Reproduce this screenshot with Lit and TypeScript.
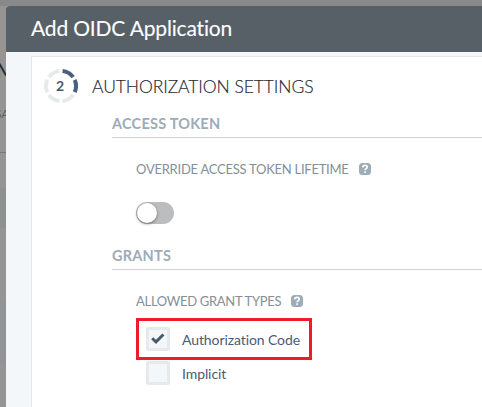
import { LitElement, html, svg, css } from "lit";
import { customElement, property, state } from "lit/decorators.js";
import { classMap } from "lit/directives/class-map.js";

@customElement("step-ring")
class StepRing extends LitElement {
  @property({ type: Number }) step = 1;
  static styles = css`
    :host { display: block; width: 34px; height: 34px; }
    svg { display: block; }
    .seg { fill: none; stroke: #e6eaed; stroke-width: 4; }
    .done { stroke: #4a607f; }
    .num { font: 700 14px Lato, sans-serif; fill: #485a70; text-anchor: middle; }
  `;
  render() {
    return html`<svg width="34" height="34" viewBox="0 0 34 34">
      ${[0, 1, 2, 3, 4, 5].map((i) => {
        const at = (deg: number) => {
          const a = ((deg - 90) * Math.PI) / 180;
          return `${17 + 15 * Math.cos(a)} ${17 + 15 * Math.sin(a)}`;
        };
        return svg`<path class=${i < this.step ? "seg done" : "seg"}
          d="M${at(i * 60 + 6)} A15 15 0 0 1 ${at(i * 60 + 54)}" />`;
      })}
      <text class="num" x="16" y="21.5">${this.step}</text>
    </svg>`;
  }
}

@customElement("help-icon")
class HelpIcon extends LitElement {
  static styles = css`
    :host { display: block; width: 12px; height: 12px; }
    svg { display: block; }
  `;
  render() {
    return html`<svg width="12" height="12" viewBox="0 0 12 12">
      <rect width="12" height="12" rx="3.5" fill="#9dacb6" />
      <path d="M3.6 4.3C3.8 2.9 4.8 2.4 6 2.4s2.3.6 2.3 1.8c0 1.5-2.2 1.3-2.2 3.1" fill="none" stroke="#fff" stroke-width="1.6" />
      <rect x="5.2" y="8.3" width="1.7" height="1.6" fill="#fff" />
    </svg>`;
  }
}

@customElement("check-option")
class CheckOption extends LitElement {
  @property({ type: Boolean }) checked = false;
  @property() label = "";
  static styles = css`
    :host { display: flex; align-items: center; height: 24px; gap: 12px; }
    .box { box-sizing: border-box; width: 24px; height: 24px; border: 3px solid #e6eaed; border-radius: 2px; background: #f3f7fa; }
    svg { display: block; }
    .label { font: 400 14px/24px Lato, sans-serif; color: #4a5a78; letter-spacing: -0.09px; white-space: nowrap; padding-top: 2px; }
  `;
  render() {
    return html`<div class="box">
        ${this.checked
          ? html`<svg width="18" height="18" viewBox="0 0 18 18"><path d="M3.2 8.2l3.8 3.7 7.4-7.4" fill="none" stroke="#4a5a6c" stroke-width="3" /></svg>`
          : ""}
      </div>
      <span class="label">${this.label}</span>`;
  }
}

@customElement("app-root")
class AppRoot extends LitElement {
  @state() override = false;
  static styles = css`
    :host { display: block; position: relative; width: 482px; height: 407px; overflow: hidden; background: #969594; font-family: Lato, sans-serif; }
    .page { position: absolute; inset: 0; }
    .topbar { height: 6px; background: #898989; }
    .behind { position: absolute; white-space: nowrap; }
    .name { left: -4px; top: 58px; font-size: 21px; line-height: 24px; color: #25282b; }
    .caption { left: -5px; top: 107px; font-size: 12px; line-height: 14px; color: #5e6264; }
    .rule { left: 0; top: 152px; width: 6px; height: 1px; background: #777; }
    .band { left: 0; top: 188px; width: 6px; height: 40px; background: #8d9291; }
    .low { left: 0; top: 303px; width: 6px; height: 62px; background: #929394; }
    .modal { position: absolute; left: 6px; top: 6px; right: 0; bottom: 0; border-radius: 3px 0 0 0; overflow: hidden; background: #f3f7fa; display: flex; flex-direction: column; }
    header { height: 46px; background: #586067; color: #fff; padding-left: 25px; font-size: 21px; line-height: 44px; letter-spacing: -0.17px; flex: none; white-space: nowrap; -webkit-text-stroke: 0.1px #fff; }
    .panel { margin: 4px 0 0 25px; flex: 1; border: 1px solid #e4e8eb; border-width: 1px 0 0 1px; background: #fff; }
    .head { display: flex; align-items: center; gap: 14px; height: 57px; padding-left: 12px; }
    .head h2 { margin: 0; font-size: 17.5px; font-weight: 300; line-height: 24px; letter-spacing: -0.08px; color: #23282f; padding-top: 3px; white-space: nowrap; -webkit-text-stroke: 0.15px #23282f; }
    section { margin-left: 80px; }
    h3 { box-sizing: border-box; margin: 0; height: 24px; border-bottom: 1px solid #d0d2d3; font-size: 14.5px; line-height: 20px; color: #9dacb6; font-weight: 700; letter-spacing: 0.23px; white-space: nowrap; }
    .fields { padding-left: 24px; }
    .lbl { display: flex; align-items: center; gap: 10px; height: 20px; font-size: 13px; line-height: 20px; letter-spacing: -0.25px; color: #858f97; white-space: nowrap; }
    .token { height: 108px; padding-top: 21px; box-sizing: border-box; }
    .grants { padding-top: 21px; }
    .grants .lbl { letter-spacing: -0.3px; }
    .switch { box-sizing: border-box; width: 38px; height: 22px; margin-top: 23px; border-radius: 11px; background: #bbbdbf; padding: 1px; }
    .knob { width: 20px; height: 20px; border-radius: 50%; background: #fff; box-shadow: 0 1px 3px rgba(0,0,0,.45); }
    .switch.on .knob { margin-left: 16px; }
    .marked { box-sizing: border-box; width: 176px; height: 42px; border: 3px solid #ec1c2a; margin-top: 7px; padding: 6px 0 0 7px; }
    .plain { padding: 1px 0 0 10px; }
  `;
  render() {
    return html`
      <div class="page">
        <div class="topbar"></div>
        <div class="behind name">M</div>
        <div class="behind caption">SA</div>
        <div class="behind rule"></div>
        <div class="behind band"></div>
        <div class="behind low"></div>
      </div>
      <div class="modal">
        <header>Add OIDC Application</header>
        <div class="panel">
          <div class="head"><step-ring .step=${2}></step-ring><h2>AUTHORIZATION SETTINGS</h2></div>
          <section>
            <h3>ACCESS TOKEN</h3>
            <div class="fields token">
              <div class="lbl"><span>OVERRIDE ACCESS TOKEN LIFETIME</span><help-icon></help-icon></div>
              <div class=${classMap({ switch: true, on: this.override })} @click=${() => (this.override = !this.override)}><div class="knob"></div></div>
            </div>
            <h3>GRANTS</h3>
            <div class="fields grants">
              <div class="lbl"><span>ALLOWED GRANT TYPES</span><help-icon></help-icon></div>
              <div class="marked"><check-option checked label="Authorization Code"></check-option></div>
              <div class="plain"><check-option label="Implicit"></check-option></div>
            </div>
          </section>
        </div>
      </div>
    `;
  }
}
